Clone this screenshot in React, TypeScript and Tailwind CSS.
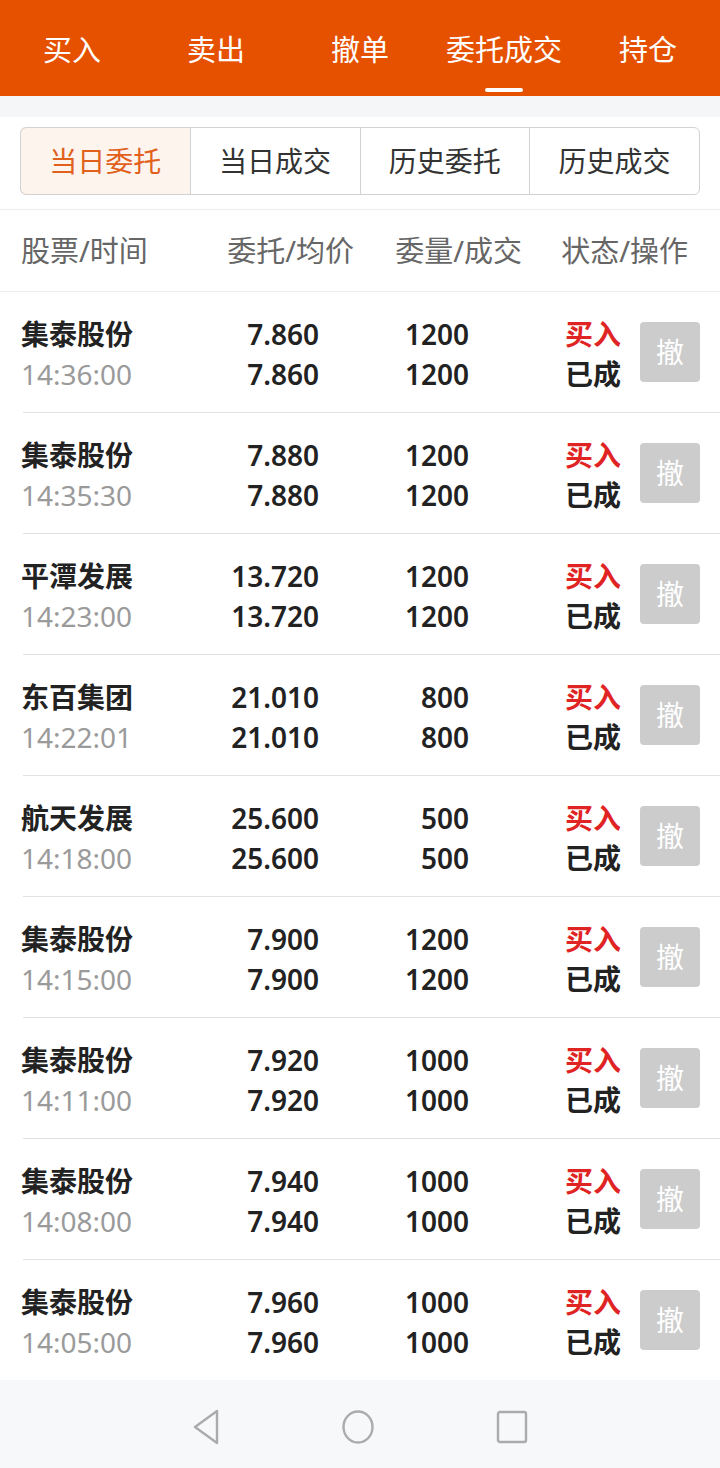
import React from 'react';

const topTabs = ['买入', '卖出', '撤单', '委托成交', '持仓'];
const segTabs = ['当日委托', '当日成交', '历史委托', '历史成交'];

const orders = [
  { name: '集泰股份', time: '14:36:00', price: '7.860', qty: '1200' },
  { name: '集泰股份', time: '14:35:30', price: '7.880', qty: '1200' },
  { name: '平潭发展', time: '14:23:00', price: '13.720', qty: '1200' },
  { name: '东百集团', time: '14:22:01', price: '21.010', qty: '800' },
  { name: '航天发展', time: '14:18:00', price: '25.600', qty: '500' },
  { name: '集泰股份', time: '14:15:00', price: '7.900', qty: '1200' },
  { name: '集泰股份', time: '14:11:00', price: '7.920', qty: '1000' },
  { name: '集泰股份', time: '14:08:00', price: '7.940', qty: '1000' },
  { name: '集泰股份', time: '14:05:00', price: '7.960', qty: '1000' },
];

const font = "font-['Noto_Sans','Noto_Sans_CJK_SC',sans-serif]";

const OrderRow = ({ o }: { o: (typeof orders)[number] }) => (
  <div className="flex h-[121px] items-center border-b border-[#e2e2e2] ml-[23px] pr-[20px] whitespace-nowrap">
    <div className="w-[148px] shrink-0 -ml-[2px] flex flex-col leading-[40px] pt-[3px]">
      <span className="font-bold text-[#222]">{o.name}</span>
      <span className="text-[#9a9a9a]">{o.time}</span>
    </div>
    <div className="w-[150px] shrink-0 flex flex-col items-end leading-[40px] pt-[3px] font-semibold text-[#222]">
      <span>{o.price}</span>
      <span>{o.price}</span>
    </div>
    <div className="w-[150px] shrink-0 flex flex-col items-end leading-[40px] pt-[3px] font-semibold text-[#222]">
      <span>{o.qty}</span>
      <span>{o.qty}</span>
    </div>
    <div className="ml-[96px] w-[56px] shrink-0 flex flex-col leading-[40px] pt-[3px] font-bold">
      <span className="text-[#e02424]">买入</span>
      <span className="text-[#222]">已成</span>
    </div>
    <div className="ml-auto shrink-0 w-[60px] h-[60px] rounded-[4px] bg-[#cccccc] flex items-center justify-center text-white">
      撤
    </div>
  </div>
);

const App = () => {
  return (
    <div className={`w-[720px] h-[1468px] flex flex-col bg-white text-[28px] ${font}`}>
      <header className="h-[96px] shrink-0 bg-[#e65100] grid grid-cols-5">
        {topTabs.map((t, i) => (
          <div key={t} className="flex flex-col items-center">
            <span className="mt-[29px] leading-[42px] text-[29px] text-white">{t}</span>
            <span className={`mt-[17px] h-[4px] w-[38px] rounded-full ${i === 3 ? 'bg-white' : 'bg-transparent'}`} />
          </div>
        ))}
      </header>

      <div className="h-[21px] shrink-0 bg-[#f5f6f8]" />

      <div className="pt-[10px] pb-[14px] px-[20px] border-b border-[#ececec]">
        <div className="flex h-[68px] rounded-[6px] border border-[#d2d2d2] overflow-hidden">
          {segTabs.map((t, i) => (
            <div
              key={t}
              className={
                i === 0
                  ? 'flex-1 flex items-center justify-center rounded-l-[6px] border border-[#d68b62] -m-px bg-[#fdf4ee] text-[#e0601c]'
                  : 'flex-1 flex items-center justify-center border-l border-[#d2d2d2] text-[#333]'
              }
            >
              {t}
            </div>
          ))}
        </div>
      </div>

      <div className="h-[82px] shrink-0 flex items-center border-b border-[#ececec] text-[#666] text-[29px] px-[21px] whitespace-nowrap">
        <span className="w-[150px] shrink-0">股票/时间</span>
        <span className="w-[183px] shrink-0 text-right">委托/均价</span>
        <span className="w-[168px] shrink-0 text-right">委量/成交</span>
        <span className="w-[166px] shrink-0 text-right">状态/操作</span>
      </div>

      <div className="flex flex-col shrink-0">
        {orders.map((o, i) => (
          <OrderRow key={i} o={o} />
        ))}
      </div>

      <nav className="flex-1 bg-[#f7f8fa] flex items-center justify-center gap-[122px] -mt-px pt-[6px]">
        <svg width="28" height="36" viewBox="0 0 28 36" fill="none" stroke="#ababab" strokeWidth="2.4" strokeLinejoin="round">
          <path d="M25 2 L3 18 L25 34 Z" />
        </svg>
        <svg width="32" height="34" viewBox="0 0 32 34" fill="none" stroke="#ababab" strokeWidth="2.4">
          <ellipse cx="16" cy="17" rx="14.5" ry="15.5" />
        </svg>
        <svg width="32" height="34" viewBox="0 0 32 34" fill="none" stroke="#ababab" strokeWidth="2.4">
          <rect x="2" y="2" width="28" height="30" rx="2" />
        </svg>
      </nav>
    </div>
  );
};

export default App;
